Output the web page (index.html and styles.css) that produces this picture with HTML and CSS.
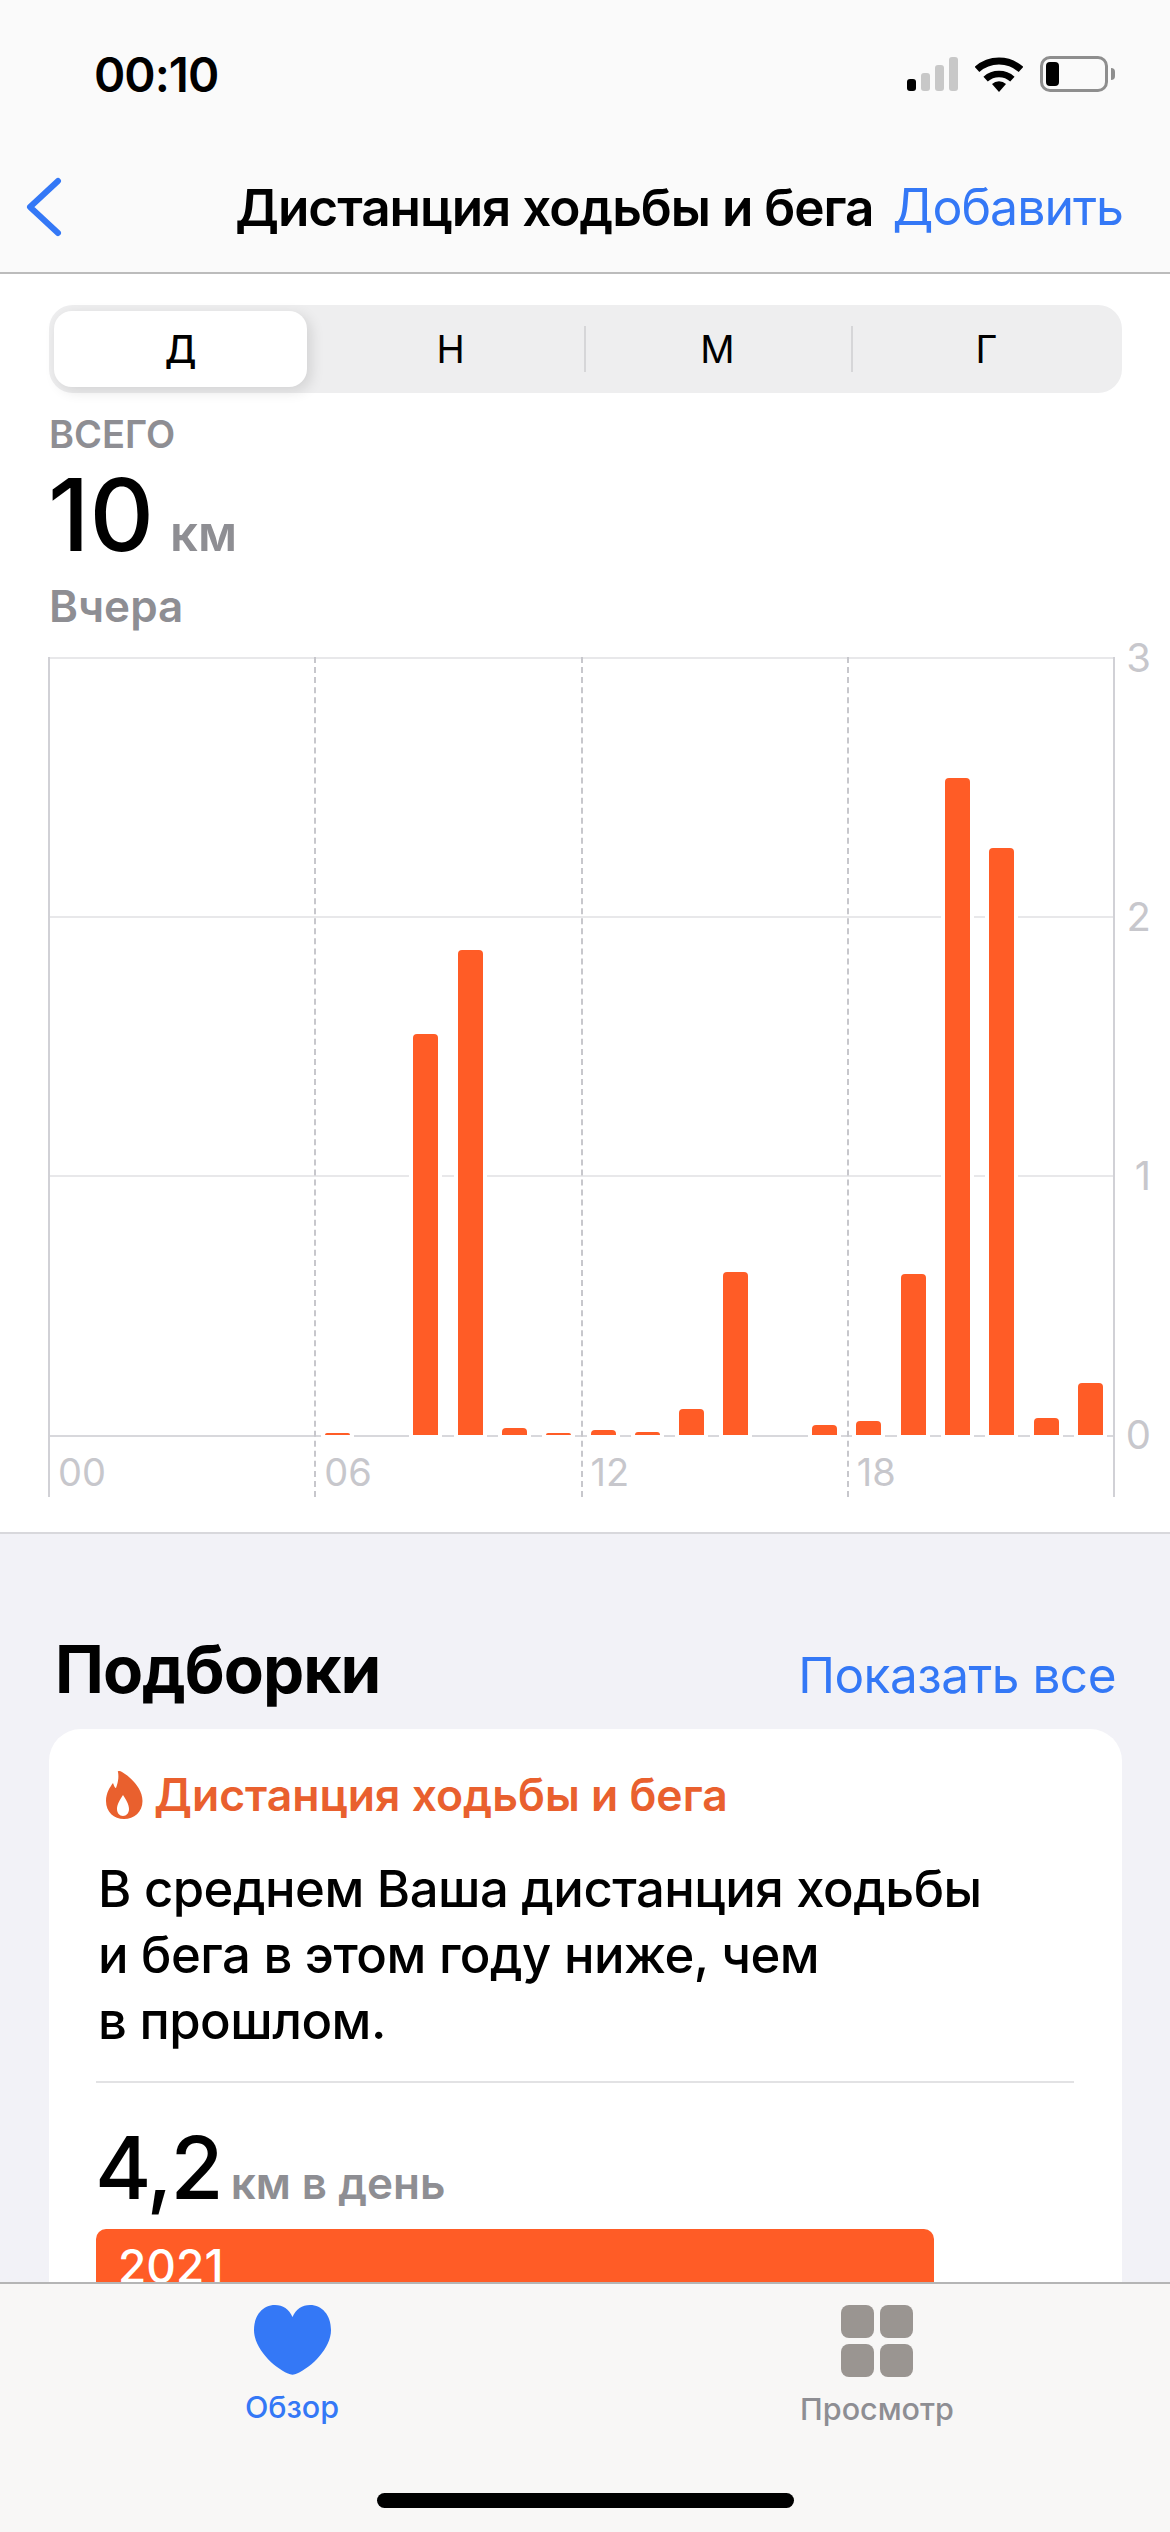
FILE: index.html
```html
<!DOCTYPE html>
<html lang="ru">
<head>
    <meta charset="UTF-8">
    <meta name="viewport" content="width=device-width, initial-scale=1.0">
    <title>Дистанция ходьбы и бега</title>
    <link rel="stylesheet" href="styles.css">
</head>
<body>
    <div class="phone">
        <!-- верхняя панель -->
        <header class="top">
            <div class="status">
                <span class="time">00:10</span>
                <div class="status-icons">
                    <div class="signal">
                        <i class="on s1"></i><i class="s2"></i><i class="s3"></i><i class="s4"></i>
                    </div>
                    <svg class="wifi" width="48" height="36" viewBox="0 0 48 36">
                        <path d="M2 13.5A33 33 0 0 1 46 13.5" fill="none" stroke="#000" stroke-width="7"/>
                        <path d="M10.6 23.1A20 20 0 0 1 37.4 23.1" fill="none" stroke="#000" stroke-width="6.5"/>
                        <path d="M24 36L17 28A10 10 0 0 1 31 28Z" fill="#000"/>
                    </svg>
                    <div class="battery"><div class="battery-fill"></div></div>
                    <div class="battery-nub"></div>
                </div>
            </div>
            <nav class="nav">
                <svg class="back" width="36" height="60" viewBox="0 0 36 60">
                    <path d="M32 4L4 30L32 56" fill="none" stroke="#3478f6" stroke-width="6" stroke-linecap="round" stroke-linejoin="round"/>
                </svg>
                <h1 class="nav-title">Дистанция ходьбы и бега</h1>
                <a class="nav-add">Добавить</a>
            </nav>
        </header>

        <!-- график -->
        <section class="panel">
            <div class="segments">
                <div class="seg"><span class="seg-active">Д</span></div>
                <div class="seg">Н</div>
                <div class="seg seg-line">М</div>
                <div class="seg seg-line">Г</div>
            </div>

            <div class="summary">
                <div class="summary-label">ВСЕГО</div>
                <div class="summary-value">10<span class="summary-unit">км</span></div>
                <div class="summary-date">Вчера</div>
            </div>

            <div class="chart">
                <div class="plot">
                    <div class="row"><span class="row-label">3</span></div>
                    <div class="row"><span class="row-label">2</span></div>
                    <div class="row"><span class="row-label">1</span><span class="row-label row-label-zero">0</span></div>
                </div>
                <div class="ticks">
                    <div class="tick tick-first"><span>00</span></div>
                    <div class="tick"><span>06</span></div>
                    <div class="tick"><span>12</span></div>
                    <div class="tick"><span>18</span></div>
                </div>
                <div class="bars">
                    <div class="slot"></div><div class="slot"></div><div class="slot"></div>
                    <div class="slot"></div><div class="slot"></div><div class="slot"></div>
                    <div class="slot"><div class="bar" style="height: 2px"></div></div>
                    <div class="slot"></div>
                    <div class="slot"><div class="bar" style="height: 401px"></div></div>
                    <div class="slot"><div class="bar" style="height: 485px"></div></div>
                    <div class="slot"><div class="bar" style="height: 7px"></div></div>
                    <div class="slot"><div class="bar" style="height: 2px"></div></div>
                    <div class="slot"><div class="bar" style="height: 5px"></div></div>
                    <div class="slot"><div class="bar" style="height: 3px"></div></div>
                    <div class="slot"><div class="bar" style="height: 26px"></div></div>
                    <div class="slot"><div class="bar" style="height: 163px"></div></div>
                    <div class="slot"></div>
                    <div class="slot"><div class="bar" style="height: 10px"></div></div>
                    <div class="slot"><div class="bar" style="height: 14px"></div></div>
                    <div class="slot"><div class="bar" style="height: 161px"></div></div>
                    <div class="slot"><div class="bar" style="height: 657px"></div></div>
                    <div class="slot"><div class="bar" style="height: 587px"></div></div>
                    <div class="slot"><div class="bar" style="height: 17px"></div></div>
                    <div class="slot"><div class="bar" style="height: 52px"></div></div>
                </div>
            </div>
        </section>

        <!-- подборки -->
        <section class="picks">
            <div class="picks-head">
                <h2 class="picks-title">Подборки</h2>
                <a class="picks-all">Показать все</a>
            </div>
            <div class="card">
                <div class="card-head">
                    <svg class="flame" width="37" height="48" viewBox="0 0 37 48">
                        <path fill="#e9602e" fill-rule="evenodd" d="M12 1C11 0 14-.5 16 1C26 7 36.500 18 36.500 30C36.500 41 28 48 18 48C8 48 0 41 0 30C0 22 4 16 7 12C8 15 9 17 10 17C12 12 13 6 12 1ZM17 24C20 29 23 33 23 38C23 42 20.500 45 17 45C13.500 45 11 42 11 38C11 33 14 29 17 24Z"/>
                    </svg>
                    <span>Дистанция ходьбы и бега</span>
                </div>
                <p class="card-text">В среднем Ваша дистанция ходьбы<br>и бега в этом году ниже, чем<br>в прошлом.</p>
                <div class="card-line"></div>
                <div class="stat"><span class="stat-num">4,2</span><span class="stat-unit">км в день</span></div>
                <div class="year-bar">2021</div>
            </div>
        </section>

        <!-- нижнее меню -->
        <footer class="tabs">
            <div class="tab tab-active">
                <svg width="77" height="70" viewBox="0 0 77 70">
                    <path fill="#3478f6" d="M38.500 12C35 4 29 0 21 0C9 0 0 10 0 25C0 43 19 62 34 68.500C36.500 70 40.500 70 43 68.500C58 62 77 43 77 25C77 10 68 0 56 0C48 0 42 4 38.500 12Z"/>
                </svg>
                <span>Обзор</span>
            </div>
            <div class="tab">
                <div class="grid-icon"><i></i><i></i><i></i><i></i></div>
                <span>Просмотр</span>
            </div>
            <div class="home-bar"></div>
        </footer>
    </div>
</body>
</html>
```

FILE: styles.css
```css
* { box-sizing: border-box; }
body { margin: 0; font-family: Inter, "Noto Sans", sans-serif; color: #000; }
h1, h2, p { margin: 0; }

.phone { position: relative; width: 1170px; height: 2532px; overflow: hidden; background: #f2f2f7; }

/* top */
.top { height: 274px; background: #fafafa; border-bottom: 2px solid #bcbcbc; }
.status { height: 148px; display: flex; align-items: center; justify-content: space-between; padding: 0 55px 0 94px; }
.time { font-size: 47.500px; font-weight: 600; letter-spacing: -1px; }
.status-icons { display: flex; align-items: center; }
.signal { display: flex; align-items: flex-end; gap: 5px; height: 34px; margin-right: 17px; }
.signal i { width: 9px; background: #c8c8c8; border-radius: 3px; }
.signal .on { background: #000; }
.s1 { height: 12px; }
.s2 { height: 18px; }
.s3 { height: 26px; }
.s4 { height: 34px; }
.wifi { margin-right: 17px; }
.battery { width: 68px; height: 36px; border: 3px solid #8e8e8e; border-radius: 10px; padding: 3px; }
.battery-fill { width: 13px; height: 100%; background: #000; border-radius: 4px; }
.battery-nub { width: 4px; height: 12px; margin-left: 3px; background: #8e8e8e; border-radius: 0 4px 4px 0; }

.nav { display: flex; align-items: center; height: 124px; padding: 0 47px 6px 26px; }
.nav-title { margin-left: auto; font-size: 51.300px; font-weight: 600; letter-spacing: -1px; white-space: nowrap; }
.nav-add { margin-left: 19px; font-size: 50px; color: #3478f6; letter-spacing: -1px; white-space: nowrap; }

/* chart panel */
.panel { height: 1260px; background: #fff; border-bottom: 2px solid #d8d8dc; padding-top: 31px; }
.segments { display: grid; grid-template-columns: 268px 267px 267px 271px; height: 88px; margin: 0 48px 0 49px; background: #eeeeef; border-radius: 24px; }
.seg { position: relative; display: flex; align-items: center; justify-content: center; font-size: 38px; }
.seg-active { display: flex; align-items: center; justify-content: center; width: 253px; height: 76px; margin: 0 7px 0 2px; background: #fff; border-radius: 18px; font-weight: 500; box-shadow: 4px 4px 14px rgba(0, 0, 0, .12); }
.seg-line::before { content: ""; position: absolute; left: 0; top: 21px; height: 46px; border-left: 2px solid #d6d6d8; }

.summary { padding-left: 48px; }
.summary-label { margin-top: 19px; padding-left: 1px; font-size: 38px; line-height: 44px; font-weight: 600; color: #8e8e93; }
.summary-value { font-size: 100px; line-height: 104px; margin-top: 7px; font-weight: 500; }
.summary-unit { margin-left: 16px; font-size: 49px; font-weight: 600; color: #8e8e93; }
.summary-date { padding-left: 1px; font-size: 44px; line-height: 50px; margin-top: -5px; font-weight: 600; color: #8e8e93; }

.chart { position: relative; width: 1067px; height: 840px; margin: 26px 0 0 48px; border-left: 2px solid #d1d1d6; border-right: 2px solid #d1d1d6; }
.plot { height: 780px; border-bottom: 2px solid #d8d8dc; }
.row { position: relative; height: 259px; border-top: 2px solid #e8e8ea; }
.row-label { position: absolute; right: -38px; top: -24px; font-size: 40px; line-height: 46px; color: #c7c7cc; }
.row-label-zero { top: auto; bottom: -24px; }
.ticks { position: absolute; inset: 0; display: flex; }
.tick { flex: 1; display: flex; align-items: flex-end; border-left: 2px dashed #c7c7cc; padding: 0 0 2px 8px; font-size: 38px; line-height: 46px; color: #c7c7cc; }
.tick-first { border-left: 0; padding-left: 8px; }
.bars { position: absolute; left: 0; right: 0; top: 0; height: 778px; display: flex; align-items: flex-end; }
.slot { flex: 1; padding-left: 9px; }
.bar { width: 25px; background: #ff5c26; border-radius: 4px 4px 0 0; box-shadow: 0 0 0 4px #fff; }

/* picks */
.picks { padding: 0 48px 0 49px; }
.picks-head { display: flex; align-items: baseline; justify-content: space-between; padding: 100px 6px 0 6px; }
.picks-title { font-size: 65.500px; line-height: 72px; font-weight: 700; letter-spacing: -1px; }
.picks-all { font-size: 49.500px; color: #3478f6; letter-spacing: -.5px; }
.card { height: 620px; margin-top: 23px; padding: 39px 48px 0 47px; background: #fff; border-radius: 32px; }
.card-head { display: flex; align-items: center; gap: 11px; margin-left: 10px; font-size: 44.500px; font-weight: 600; color: #e9602e; }
.card-text { margin: 34px 0 0 2px; font-size: 50.800px; line-height: 66px; font-weight: 500; letter-spacing: -.5px; white-space: nowrap; }
.card-line { height: 2px; margin-top: 27px; background: #e2e2e4; }
.stat { display: flex; align-items: baseline; margin: 35px 0 0 -1px; }
.stat-num { font-size: 86px; line-height: 100px; font-weight: 500; letter-spacing: -2px; }
.stat-unit { margin-left: 9px; font-size: 44px; font-weight: 600; color: #8e8e93; }
.year-bar { width: 838px; height: 90px; margin-top: 11px; padding: 9px 0 0 22px; background: #ff5c26; border-radius: 10px 10px 0 0; color: #fff; font-size: 46px; font-weight: 500; }

/* tab bar */
.tabs { position: absolute; left: 0; right: 0; bottom: 0; height: 250px; display: grid; grid-template-columns: 584px 586px; padding-top: 21px; background: #f8f7f6; border-top: 2px solid #b5b5b5; }
.tab { display: flex; flex-direction: column; align-items: center; gap: 13px; font-size: 30.500px; font-weight: 500; color: #8e8e93; }
.tab-active { color: #3478f6; }
.grid-icon { display: grid; grid-template-columns: 33px 33px; grid-auto-rows: 33px; gap: 6px; }
.grid-icon i { background: #9a9591; border-radius: 8px; }
.home-bar { position: absolute; left: 377px; bottom: 24px; width: 417px; height: 15px; background: #000; border-radius: 8px; }
```
